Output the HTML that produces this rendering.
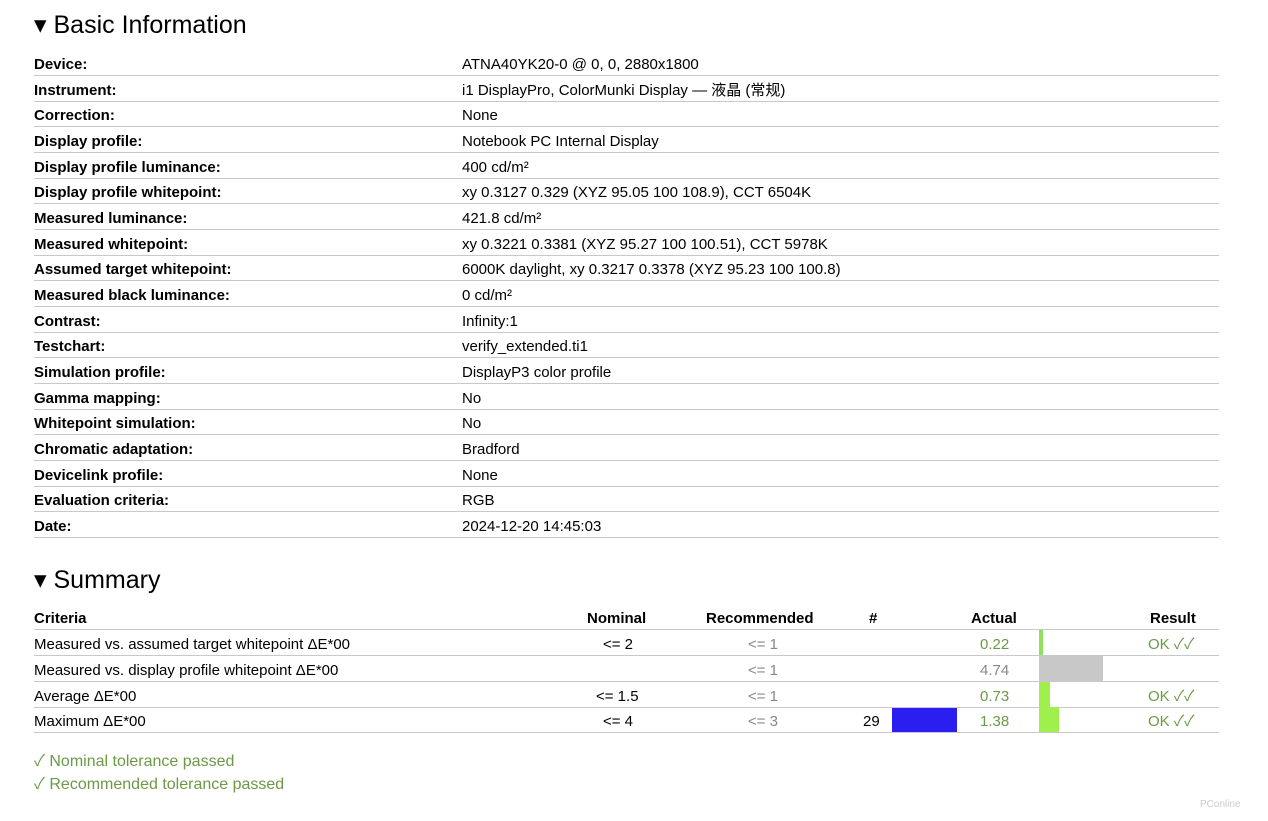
<!DOCTYPE html>
<html><head><meta charset="utf-8"><style>
body{margin:0;width:1268px;height:821px;background:#fff;font-family:"Liberation Sans","Noto Sans CJK SC",sans-serif;color:#000;position:relative;overflow:hidden}
.a{position:absolute;white-space:nowrap;font-size:15px;line-height:17px}
h2{position:absolute;margin:0;font-weight:normal;font-size:25px;left:34px}
.row{position:absolute;left:34px;width:1185px;height:25px;border-bottom:1px solid #c8c8c8}
.row .l{position:absolute;left:0;top:6px;font-weight:bold;font-size:15px;line-height:17px;white-space:nowrap}
.row .v{position:absolute;left:428px;top:6px;font-size:15px;line-height:17px;white-space:nowrap}
.row .a{top:6px!important}
.g{color:#6b9a45}
.gr{color:#888}
.bar{position:absolute}
</style></head><body>
<h2 style="top:10px">▾ Basic Information</h2>
<div class="row" style="top:50px"><span class="l">Device:</span><span class="v">ATNA40YK20-0 @ 0, 0, 2880x1800</span></div>
<div class="row" style="top:75.7px"><span class="l">Instrument:</span><span class="v">i1 DisplayPro, ColorMunki Display — 液晶 (常规)</span></div>
<div class="row" style="top:101.3px"><span class="l">Correction:</span><span class="v">None</span></div>
<div class="row" style="top:127px"><span class="l">Display profile:</span><span class="v">Notebook PC Internal Display</span></div>
<div class="row" style="top:152.7px"><span class="l">Display profile luminance:</span><span class="v">400 cd/m²</span></div>
<div class="row" style="top:178.3px"><span class="l">Display profile whitepoint:</span><span class="v">xy 0.3127 0.329 (XYZ 95.05 100 108.9), CCT 6504K</span></div>
<div class="row" style="top:204px"><span class="l">Measured luminance:</span><span class="v">421.8 cd/m²</span></div>
<div class="row" style="top:229.7px"><span class="l">Measured whitepoint:</span><span class="v">xy 0.3221 0.3381 (XYZ 95.27 100 100.51), CCT 5978K</span></div>
<div class="row" style="top:255.3px"><span class="l">Assumed target whitepoint:</span><span class="v">6000K daylight, xy 0.3217 0.3378 (XYZ 95.23 100 100.8)</span></div>
<div class="row" style="top:281px"><span class="l">Measured black luminance:</span><span class="v">0 cd/m²</span></div>
<div class="row" style="top:306.7px"><span class="l">Contrast:</span><span class="v">Infinity:1</span></div>
<div class="row" style="top:332.3px"><span class="l">Testchart:</span><span class="v">verify_extended.ti1</span></div>
<div class="row" style="top:358px"><span class="l">Simulation profile:</span><span class="v">DisplayP3 color profile</span></div>
<div class="row" style="top:383.7px"><span class="l">Gamma mapping:</span><span class="v">No</span></div>
<div class="row" style="top:409.3px"><span class="l">Whitepoint simulation:</span><span class="v">No</span></div>
<div class="row" style="top:435px"><span class="l">Chromatic adaptation:</span><span class="v">Bradford</span></div>
<div class="row" style="top:460.7px"><span class="l">Devicelink profile:</span><span class="v">None</span></div>
<div class="row" style="top:486.3px"><span class="l">Evaluation criteria:</span><span class="v">RGB</span></div>
<div class="row" style="top:512px"><span class="l">Date:</span><span class="v">2024-12-20 14:45:03</span></div>

<h2 style="top:565px">▾ Summary</h2>
<div class="row" style="top:604px;height:25px"><span class="l">Criteria</span>
<span class="a" style="left:553px;font-weight:bold">Nominal</span>
<span class="a" style="left:672px;font-weight:bold">Recommended</span>
<span class="a" style="left:835px;font-weight:bold">#</span>
<span class="a" style="left:937px;font-weight:bold">Actual</span>
<span class="a" style="left:1116px;font-weight:bold">Result</span></div>

<div class="row" style="top:630px"><span class="v" style="left:0">Measured vs. assumed target whitepoint ΔE*00</span>
<span class="a" style="left:569px">&lt;= 2</span><span class="a gr" style="left:714px">&lt;= 1</span>
<span class="a g" style="left:946px">0.22</span><div class="bar" style="left:1005px;top:0;width:4px;height:25px;background:#8fe05a"></div>
<span class="a g" style="left:1114px">OK ✓✓</span></div>
<div class="row" style="top:656px"><span class="v" style="left:0">Measured vs. display profile whitepoint ΔE*00</span>
<span class="a gr" style="left:714px">&lt;= 1</span>
<span class="a gr" style="left:946px">4.74</span><div class="bar" style="left:1005px;top:0;width:64px;height:25px;background:#c8c8c8"></div></div>
<div class="row" style="top:681.5px"><span class="v" style="left:0">Average ΔE*00</span>
<span class="a" style="left:562px">&lt;= 1.5</span><span class="a gr" style="left:714px">&lt;= 1</span>
<span class="a g" style="left:946px">0.73</span><div class="bar" style="left:1005px;top:0;width:11px;height:25px;background:#9ff04c"></div>
<span class="a g" style="left:1114px">OK ✓✓</span></div>
<div class="row" style="top:707px"><span class="v" style="left:0">Maximum ΔE*00</span>
<span class="a" style="left:569px">&lt;= 4</span><span class="a gr" style="left:714px">&lt;= 3</span>
<span class="a" style="left:829px">29</span><div class="bar" style="left:858px;top:1px;width:65px;height:24px;background:#2a1ef0"></div>
<span class="a g" style="left:946px">1.38</span><div class="bar" style="left:1005px;top:0;width:20px;height:25px;background:#9ff04c"></div>
<span class="a g" style="left:1114px">OK ✓✓</span></div>

<div class="a g" style="left:34px;top:753px;font-size:16px;line-height:18px">✓ Nominal tolerance passed</div>
<div class="a g" style="left:34px;top:776px;font-size:16px;line-height:18px">✓ Recommended tolerance passed</div>
<div class="a" style="left:1200px;top:796px;font-size:10px;color:#ccc">PConline</div>
</body></html>
